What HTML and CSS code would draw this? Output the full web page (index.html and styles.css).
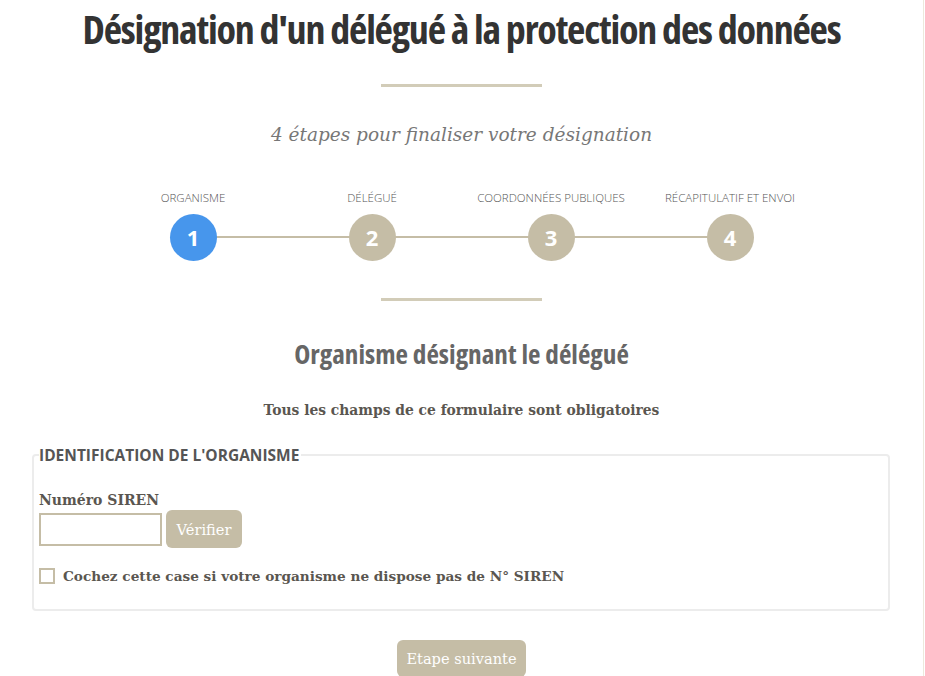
FILE: index.html
```html
<!DOCTYPE html>
<html lang="fr">
<head>
<meta charset="utf-8">
<title>Désignation DPO</title>
<link rel="stylesheet" href="styles.css">
</head>
<body>
<div class="page">
  <h1 class="title">Désignation d'un délégué à la protection des données</h1>
  <hr class="sep">
  <p class="subtitle">4 étapes pour finaliser votre désignation</p>
  <ol class="steps">
    <li class="step active"><span class="step-label">Organisme</span><span class="step-num">1</span></li>
    <li class="step"><span class="step-label">Délégué</span><span class="step-num">2</span></li>
    <li class="step"><span class="step-label">Coordonnées publiques</span><span class="step-num">3</span></li>
    <li class="step last"><span class="step-label">Récapitulatif et envoi</span><span class="step-num">4</span></li>
  </ol>
  <hr class="sep sep2">
  <h2 class="section-title">Organisme désignant le délégué</h2>
  <p class="required">Tous les champs de ce formulaire sont obligatoires</p>
  <fieldset class="box">
    <legend class="legend">Identification de l'organisme</legend>
    <label class="field-label" for="siren">Numéro SIREN</label>
    <div class="siren-row">
      <input id="siren" class="input" type="text">
      <button class="btn btn-small" type="button">Vérifier</button>
    </div>
    <label class="check-row"><span class="checkbox"></span><span class="check-text">Cochez cette case si votre organisme ne dispose pas de N° SIREN</span></label>
  </fieldset>
  <div class="actions"><button class="btn btn-next" type="button">Etape suivante</button></div>
</div>
</body>
</html>
```
FILE: styles.css
```css
html, body { margin: 0; padding: 0; background: #fff; }
body { font-family: "DejaVu Serif", serif; color: #5a5650; }
.page {
  width: 923px;
  border-right: 1px solid #ece9dc;
  min-height: 676px;
  box-sizing: content-box;
  display: flex;
  flex-direction: column;
  align-items: center;
}
.title {
  margin: 5px 0 0;
  font-family: "Open Sans", sans-serif;
  font-weight: 700;
  font-stretch: 75%;
  font-size: 40px;
  line-height: 48px;
  color: #333;
  letter-spacing: -1.2px;
}
.sep {
  width: 161px;
  height: 3px;
  border: 0;
  margin: 31px 0 0;
  background: #d2ccb8;
}
.subtitle {
  margin: 34px 0 0;
  font-style: italic;
  font-size: 18.5px;
  line-height: 28px;
  color: #777;
}
.steps {
  list-style: none;
  margin: 41px 0 0;
  padding: 0;
  display: grid;
  grid-template-columns: repeat(4, 179px);
}
.step {
  position: relative;
  display: flex;
  flex-direction: column;
  align-items: center;
}
.step::after {
  content: "";
  position: absolute;
  left: 50%;
  width: 179px;
  top: 46px;
  height: 2px;
  background: #c5bda6;
}
.step.last::after { display: none; }
.step-label {
  font-family: "Open Sans", sans-serif;
  font-weight: 300;
  font-size: 11.5px;
  line-height: 15px;
  text-transform: uppercase;
  color: #555;
  white-space: nowrap;
}
.step-num {
  position: relative;
  z-index: 1;
  margin-top: 9px;
  width: 47px;
  height: 47px;
  border-radius: 50%;
  background: #c5bda6;
  color: #fff;
  font-family: "Open Sans", sans-serif;
  font-weight: 700;
  font-size: 22px;
  line-height: 47px;
  text-align: center;
}
.step.active .step-num { background: #4796ec; }
.sep2 { margin-top: 37px; }
.section-title {
  margin: 36px 0 0;
  font-family: "Open Sans", sans-serif;
  font-weight: 700;
  font-stretch: 75%;
  font-size: 27.2px;
  line-height: 34px;
  color: #666;
}
.required {
  margin: 29px 0 0;
  font-weight: 700;
  font-size: 13.85px;
  line-height: 20px;
}
.box {
  align-self: stretch;
  margin: 24px 33px 0 32px;
  padding: 24px 4px 25px 5px;
  border: 2px solid #ececec;
  border-radius: 4px;
  min-width: 0;
}
.legend {
  padding: 0 2px 0 0;
  margin-left: 0;
  font-family: "Open Sans", sans-serif;
  font-weight: 700;
  font-size: 15.5px;
  text-transform: uppercase;
  color: #555;
}
.field-label {
  display: block;
  font-weight: 700;
  font-size: 14px;
  line-height: 20px;
}
.siren-row {
  display: flex;
  align-items: center;
  gap: 4px;
  margin-top: 0;
}
.input {
  width: 123px;
  height: 33px;
  box-sizing: border-box;
  border: 2px solid #c5bda6;
  margin: 0;
  padding: 0 4px;
}
.btn {
  border: 0;
  background: #c5bda6;
  color: #fff;
  font-family: "DejaVu Serif", serif;
  font-size: 14.6px;
  border-radius: 6px;
  cursor: pointer;
}
.btn-small { width: 76px; height: 38px; padding: 0; }
.check-row {
  display: flex;
  align-items: center;
  gap: 8px;
  margin-top: 20px;
}
.checkbox {
  width: 16px;
  height: 16px;
  box-sizing: border-box;
  border: 2px solid #c5bda6;
}
.check-text {
  font-weight: 700;
  font-size: 13.65px;
}
.actions { margin-top: 29px; }
.btn-next { width: 129px; height: 37px; padding: 0; }
```
